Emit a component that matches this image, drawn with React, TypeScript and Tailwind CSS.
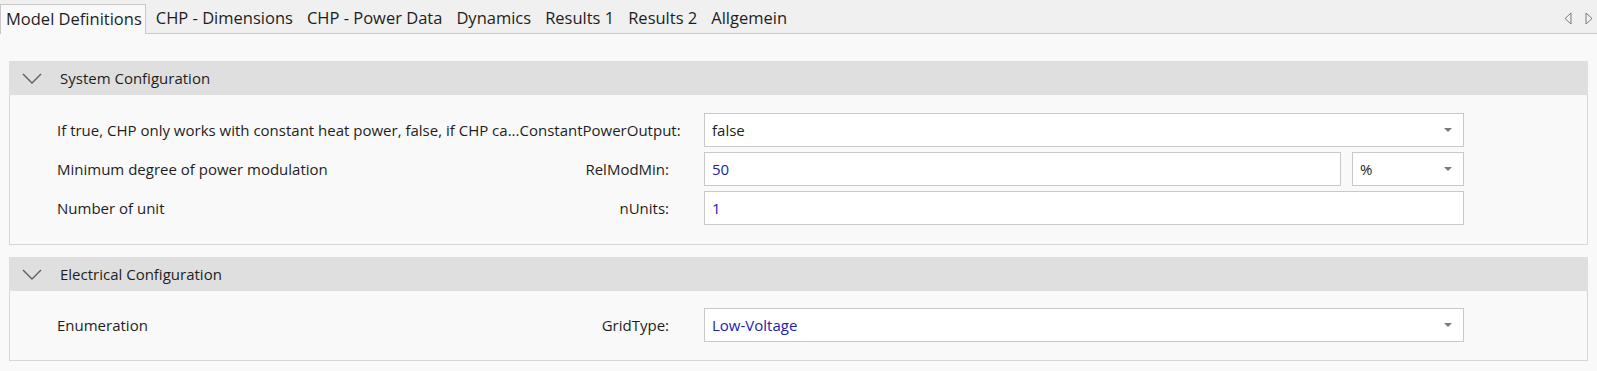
import React from "react";

const font = { fontFamily: '"Open Sans", "Noto Sans", Arial, sans-serif' };

function Chevron() {
  return (
    <svg width="20" height="11" viewBox="0 0 20 11" className="shrink-0">
      <path d="M1 1 L10 10 L19 1" fill="none" stroke="#5f5f5f" strokeWidth="1.4" />
    </svg>
  );
}

function DropArrow() {
  return (
    <svg width="8" height="4" viewBox="0 0 8 4" className="shrink-0">
      <path d="M0 0 L8 0 L4 4 Z" fill="#7a7a7a" />
    </svg>
  );
}

function SectionHeader({ title }: { title: string }) {
  return (
    <div className="flex h-[34px] items-center bg-[#dfdfdf] pl-[13px]">
      <Chevron />
      <span className="ml-[18px] text-[15px] text-[#1e1e1e]">{title}</span>
    </div>
  );
}

function Row({
  label,
  param,
  children,
}: {
  label: string;
  param?: string;
  children: React.ReactNode;
}) {
  return (
    <div className="flex h-[34px] items-center">
      <div className="flex w-[612px] items-center justify-between text-[15px] text-[#1e1e1e]">
        <span className="whitespace-nowrap">{label}</span>
        {param && <span className="whitespace-nowrap">{param}</span>}
      </div>
      <div className="ml-[35px] flex h-full w-[760px] gap-[11px]">{children}</div>
    </div>
  );
}

function Box({
  value,
  blue,
  dropdown,
  className,
}: {
  value: string;
  blue?: boolean;
  dropdown?: boolean;
  className?: string;
}) {
  return (
    <div
      className={
        "flex h-full items-center border border-[#c9c9c9] bg-white pl-[7px] pr-[11px] text-[15px] " +
        (blue ? "text-[#2020b8] " : "text-[#1e1e1e] ") +
        (className ?? "flex-1")
      }
    >
      <span className="flex-1">{value}</span>
      {dropdown && <DropArrow />}
    </div>
  );
}

export default function App() {
  const tabs = ["CHP - Dimensions", "CHP - Power Data", "Dynamics", "Results 1", "Results 2", "Allgemein"];
  return (
    <div className="h-[371px] w-[1597px] overflow-hidden bg-[#f9f9f9]" style={font}>
      {/* Tab bar */}
      <div className="flex h-[34px] items-end border-b border-[#c8c8c8] bg-[#f0f0f0] pt-[3px]">
        <div className="-mb-px flex h-[30px] items-center border-x border-t border-[#c8c8c8] bg-[#f9f9f9] pl-[5px] pr-[3px] text-[16.5px] text-[#1e1e1e]">
          Model Definitions
        </div>
        <div className="flex h-[30px] items-center pl-[3px]">
          {tabs.map((t) => (
            <div key={t} className="px-[7px] text-[16.5px] text-[#1e1e1e]">
              {t}
            </div>
          ))}
        </div>
        <div className="ml-auto flex h-[30px] items-center gap-[13px] pr-[4px]">
          <svg width="8" height="13" viewBox="0 0 8 13">
            <path d="M7 1 L1 6.5 L7 12 Z" fill="none" stroke="#7a7a7a" strokeWidth="1" />
          </svg>
          <svg width="8" height="13" viewBox="0 0 8 13">
            <path d="M1 1 L7 6.5 L1 12 Z" fill="none" stroke="#7a7a7a" strokeWidth="1" />
          </svg>
        </div>
      </div>

      <div className="mx-[9px] mt-[27px]">
        {/* System Configuration */}
        <SectionHeader title="System Configuration" />
        <div className="flex flex-col gap-[5px] border-x border-b border-[#d6d6d6] pb-[19px] pl-[47px] pt-[18px]">
          <Row label="If true, CHP only works with constant heat power, false, if CHP ca...ConstantPowerOutput:">
            <Box value="false" dropdown />
          </Row>
          <Row label="Minimum degree of power modulation" param="RelModMin:">
            <Box value="50" blue />
            <Box value="%" dropdown className="w-[112px]" />
          </Row>
          <Row label="Number of unit" param="nUnits:">
            <Box value="1" blue />
          </Row>
        </div>

        {/* Electrical Configuration */}
        <div className="mt-[12px]">
          <SectionHeader title="Electrical Configuration" />
          <div className="flex flex-col border-x border-b border-[#d6d6d6] pb-[18px] pl-[47px] pt-[17px]">
            <Row label="Enumeration" param="GridType:">
              <Box value="Low-Voltage" blue dropdown />
            </Row>
          </div>
        </div>
      </div>
    </div>
  );
}
